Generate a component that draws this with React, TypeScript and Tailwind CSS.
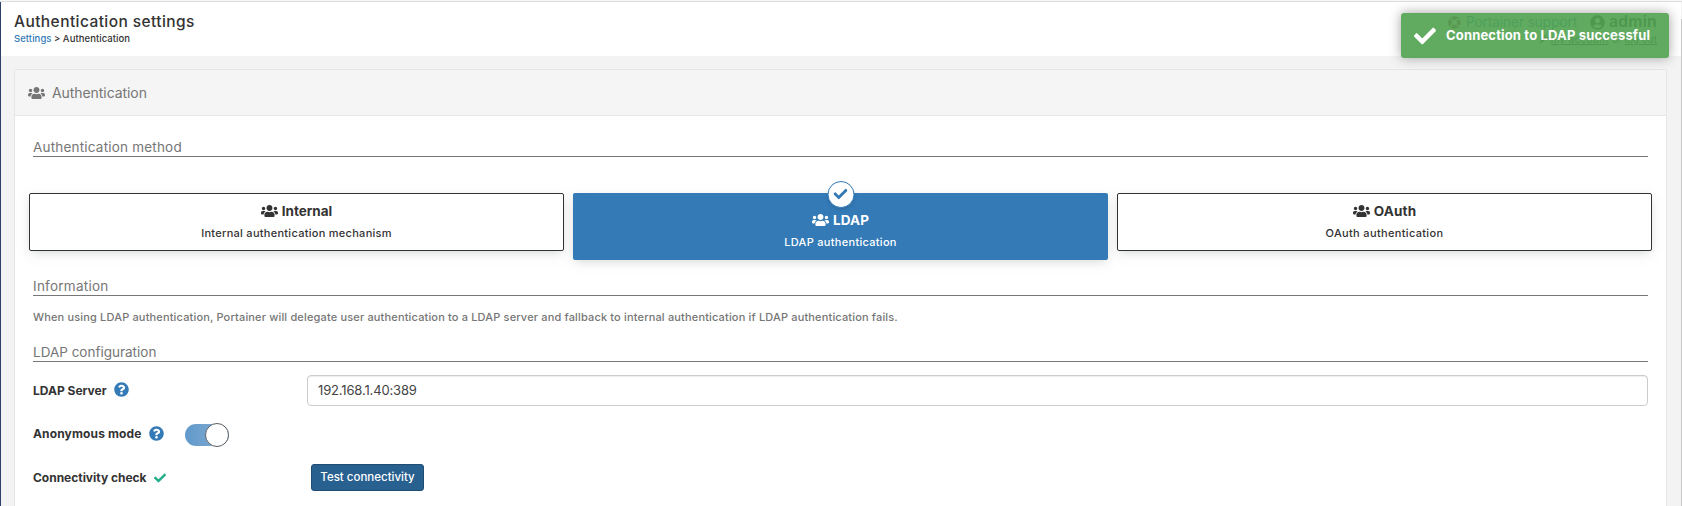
import type { ReactNode } from "react";
import { FaCheck, FaLifeRing, FaQuestionCircle, FaUserCircle, FaUsers, FaWrench } from "react-icons/fa";

function Section({ children, className }: { children: ReactNode; className: string }) {
  return (
    <h2 className={`mx-[18px] flex h-[20px] items-center border-b border-[#777777] pt-px text-[13.5px] leading-[18px] text-[#767676] ${className}`}>
      {children}
    </h2>
  );
}

function MethodText({ title, titleClass, text, textClass }: { title: string; titleClass: string; text: string; textClass: string }) {
  return (
    <>
      <div className="flex items-center justify-center text-[13.5px] font-bold leading-[20px]">
        <FaUsers className="mr-[4px] h-[14px] w-[17px]" />
        <span className={titleClass}>{title}</span>
      </div>
      <div className={`mt-[2px] text-[11px] font-medium leading-[20px] ${textClass}`}>{text}</div>
    </>
  );
}

const plainBox =
  "h-[58px] rounded-[2px] border border-[#333333] pt-[7px] shadow-[0_3px_10px_-2px_rgba(161,170,166,0.5)]";

export default function App() {
  return (
    <div className="relative flex h-[506px] w-full flex-col overflow-hidden bg-[#f3f3f3] font-['Inter',sans-serif] text-[#333333]">
      <div className="h-[2px] shrink-0 border-b border-[#dddddd] bg-[#f8f8f8]" />
      <div className="flex min-h-0 grow">
        <div className="flex min-w-0 grow flex-col border-l border-[#2d3e6b]">
          <header className="flex h-[54px] shrink-0 justify-between bg-white pl-[13px] pr-[24px]">
            <div className="pt-[10px]">
              <h1 className="text-[15.5px] font-medium leading-[20px] tracking-[0.42px]">Authentication settings</h1>
              <div className="text-[9.5px] font-medium leading-[14px]">
                <a className="text-[#337ab7] tracking-[0.06px]">Settings</a>
                <span className="mx-[2.5px]">&gt;</span>
                <span className="tracking-[0.06px]">Authentication</span>
              </div>
            </div>
            <div className="flex flex-col items-end pt-[10px]">
              <div className="flex items-center text-[14px] leading-[20px]">
                <FaLifeRing className="mr-[5px] size-[13px] text-[#a94442]" />
                <span className="tracking-[-0.25px] text-[#337ab7]">Portainer support</span>
                <FaUserCircle className="ml-[13px] mr-[4px] size-[15px]" />
                <b className="text-[15.5px] tracking-[0.25px]">admin</b>
              </div>
              <div className="flex items-center gap-[3px] text-[10px] leading-[14px]">
                <FaWrench className="size-[8px]" />
                <u className="tracking-[0.28px]">my account</u>
                <span>or</span>
                <u>log out</u>
              </div>
            </div>
          </header>

          <main className="ml-[13px] mr-[14px] mt-[13px] flex grow flex-col rounded-t-[2px] border border-b-0 border-[#e6e6e6] bg-white">
            <div className="flex h-[46px] shrink-0 items-center border-b border-[#e6e6e6] bg-[#f5f5f5] pl-[13px] text-[14px] text-[#767676]">
              <FaUsers className="mr-[7px] h-[14px] w-[17px]" />
              <span className="tracking-[-0.07px]">Authentication</span>
            </div>

            <Section className="mt-[21px] tracking-[0.2px]">Authentication method</Section>

            <div className="mx-[14px] mt-[36px] grid h-[67px] grid-cols-3 items-start gap-[9px] text-center">
              <div className={plainBox}>
                <MethodText title="Internal" titleClass="" text="Internal authentication mechanism" textClass="tracking-[0.28px]" />
              </div>
              <div className="relative h-[67px] rounded-[2px] bg-[#337ab7] pt-[17px] text-white shadow-[0_3px_10px_-2px_rgba(161,170,166,0.5)]">
                <div className="absolute left-1/2 top-[-12px] flex size-[27px] -translate-x-1/2 items-center justify-center rounded-full border border-[#337ab7] bg-white shadow-[0_2px_5px_-2px_rgba(0,0,0,0.25)]">
                  <FaCheck className="mb-[2px] size-[14px] text-[#337ab7]" />
                </div>
                <MethodText title="LDAP" titleClass="tracking-[0.1px]" text="LDAP authentication" textClass="tracking-[0.3px]" />
              </div>
              <div className={plainBox}>
                <MethodText title="OAuth" titleClass="tracking-[0.15px]" text="OAuth authentication" textClass="tracking-[0.34px]" />
              </div>
            </div>

            <Section className="mt-[16px] tracking-[0.25px]">Information</Section>
            <p className="ml-[18px] mt-[11px] text-[11px] font-medium leading-[20px] tracking-[0.16px] text-[#767676]">
              When using LDAP authentication, Portainer will delegate user authentication to a LDAP server and fallback to internal authentication if LDAP authentication fails.
            </p>
            <Section className="mt-[15px]">LDAP configuration</Section>

            <div className="mx-[18px] mt-[13px] flex h-[31px] items-center">
              <label className="flex w-[274px] items-center text-[12px] font-bold">
                LDAP Server
                <FaQuestionCircle className="mb-[2px] ml-[7px] size-[15px] text-[#337ab7]" />
              </label>
              <div className="flex h-[31px] grow items-center rounded-[4px] border border-[#cccccc] px-[10px] text-[13px] tracking-[-0.15px] text-[#444444] shadow-[inset_0_1px_1px_rgba(0,0,0,0.075)]">
                192.168.1.40:389
              </div>
            </div>

            <div className="mx-[18px] mt-[17px] flex h-[24px] items-center">
              <label className="flex w-[152px] items-center text-[12px] font-bold tracking-[0.14px]">
                <span className="-mt-[2px]">Anonymous mode</span>
                <FaQuestionCircle className="mb-[4px] ml-[7px] size-[15px] text-[#337ab7]" />
              </label>
              <div className="flex h-[22px] w-[44px] items-center justify-end rounded-full bg-gradient-to-r from-[#6099cb] to-[#86aed3]">
                <div className="size-[24px] shrink-0 rounded-full border border-[#5a5f66] bg-white" />
              </div>
            </div>

            <div className="mx-[18px] mt-[17px] flex h-[27px] items-center">
              <label className="flex w-[278px] items-center text-[12px] font-bold tracking-[-0.02px]">
                Connectivity check
                <FaCheck className="ml-[7px] size-[12px] text-[#23ae89]" />
              </label>
              <button className="h-[27px] w-[113px] rounded-[3px] border border-[#204d74] bg-[#286090] text-[11.5px] font-medium text-white">
                Test connectivity
              </button>
            </div>
          </main>
        </div>
        <div className="mt-[17px] w-px shrink-0 bg-[#c8c8c8]" />
      </div>

      <div className="absolute right-[13px] top-[13px] flex h-[45px] w-[268px] items-center rounded-[3px] bg-[#51a351] pl-[13px] text-white opacity-90 shadow-[0_0_12px_#999999]">
        <FaCheck className="size-[22px]" />
        <span className="ml-[10px] text-[13px] font-bold tracking-[0.16px]">Connection to LDAP successful</span>
      </div>
    </div>
  );
}
